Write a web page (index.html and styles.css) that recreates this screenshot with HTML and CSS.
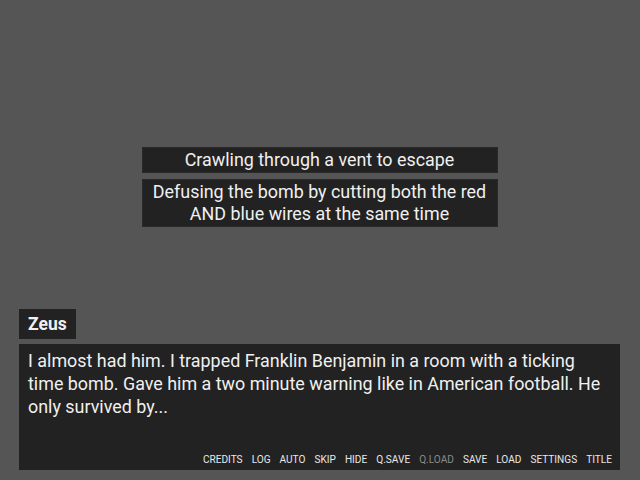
FILE: index.html
```html
<!DOCTYPE html>
<html lang="en">
<head>
<meta charset="utf-8">
<title>Zeus</title>
<link rel="stylesheet" href="styles.css">
</head>
<body>
<div class="screen">
  <div class="choices">
    <button class="choice">Crawling through a vent to escape</button>
    <button class="choice">Defusing the bomb by cutting both the red<br>AND blue wires at the same time</button>
  </div>
  <div class="say">
    <div class="namebox">Zeus</div>
    <div class="textbox">
      <p class="what">I almost had him. I trapped Franklin Benjamin in a room with a ticking time bomb. Gave him a two minute warning like in American football. He only survived by...</p>
      <nav class="quick">
        <span>CREDITS</span>
        <span>LOG</span>
        <span>AUTO</span>
        <span>SKIP</span>
        <span>HIDE</span>
        <span>Q.SAVE</span>
        <span class="off">Q.LOAD</span>
        <span>SAVE</span>
        <span>LOAD</span>
        <span>SETTINGS</span>
        <span>TITLE</span>
      </nav>
    </div>
  </div>
</div>
</body>
</html>
```

FILE: styles.css
```css
html, body {
  margin: 0;
  padding: 0;
  background: #555555;
}

.screen {
  width: 640px;
  height: 480px;
  display: flex;
  flex-direction: column;
  font-family: Roboto, "Liberation Sans", sans-serif;
  color: #f0f0f0;
}

.choices {
  margin-top: 147px;
  display: flex;
  flex-direction: column;
  align-items: center;
  gap: 6px;
}

.choice {
  width: 356px;
  box-sizing: border-box;
  background: #222222;
  border: 1px solid #2a2a2a;
  color: #f0f0f0;
  font: 17.9px/22px Roboto, "Liberation Sans", sans-serif;
  padding: 1px 4px 1px;
  text-align: center;
  margin-left: -1px;
}

.say {
  margin-top: auto;
  margin-bottom: 10px;
  padding-left: 19px;
  display: flex;
  flex-direction: column;
  align-items: flex-start;
  gap: 5px;
}

.namebox {
  background: #222222;
  font-size: 17.5px;
  font-weight: bold;
  line-height: 30px;
  height: 30px;
  padding: 0 9px;
}

.textbox {
  width: 601px;
  height: 126px;
  box-sizing: border-box;
  background: #222222;
  padding: 5px 8px 0 9px;
  display: flex;
  flex-direction: column;
}

.what {
  margin: 0;
  font-size: 17.9px;
  line-height: 23px;
}

.quick {
  margin-top: auto;
  margin-bottom: 3px;
  display: flex;
  justify-content: flex-end;
  gap: 9px;
  font-size: 10.1px;
  line-height: 14px;
  color: #e8e8e8;
}

.quick .off {
  color: #8a8a8a;
}
```
